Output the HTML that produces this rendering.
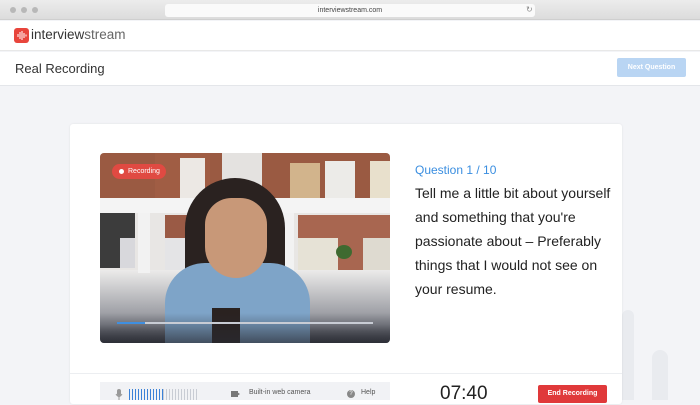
<!DOCTYPE html>
<html><head><style>
*{margin:0;padding:0;box-sizing:border-box}
body{width:700px;height:400px;overflow:hidden;background:#f3f4f7;font-family:"Liberation Sans",sans-serif;position:relative}
.a{position:absolute}
</style></head><body>
<div class="a" style="left:0;top:0;width:700px;height:20px;background:linear-gradient(#ececec,#dcdcdc);border-bottom:1px solid #cfcfcf"></div>
<div class="a" style="left:10px;top:7px;width:6px;height:6px;border-radius:50%;background:#b8b8b8"></div>
<div class="a" style="left:21px;top:7px;width:6px;height:6px;border-radius:50%;background:#b8b8b8"></div>
<div class="a" style="left:32px;top:7px;width:6px;height:6px;border-radius:50%;background:#b8b8b8"></div>
<div class="a" style="left:165px;top:4px;width:370px;height:13px;background:#fafafa;border-radius:3px;font-size:7px;color:#444;text-align:center;line-height:13px">interviewstream.com</div>
<div class="a" style="left:526px;top:5px;font-size:8px;color:#888">↻</div>
<div class="a" style="left:0;top:21px;width:700px;height:30px;background:#fff;border-bottom:1px solid #e8e8e8"></div>
<div class="a" style="left:14px;top:28px;width:15px;height:15px;border-radius:3px;background:#e8453c"></div>
<svg class="a" style="left:14px;top:28px" width="15" height="15"><g stroke="#fff" stroke-width="1"><line x1="4" y1="6" x2="4" y2="9"/><line x1="6" y1="4" x2="6" y2="11"/><line x1="8" y1="3" x2="8" y2="12"/><line x1="10" y1="5" x2="10" y2="10"/><line x1="12" y1="6.5" x2="12" y2="8.5"/></g></svg>
<div class="a" style="left:31px;top:27px;font-size:13.5px;color:#222"><span style="color:#333">interview</span><span style="color:#666">stream</span></div>
<div class="a" style="left:0;top:52px;width:700px;height:34px;background:#fff;border-bottom:1px solid #e4e6ea"></div>
<div class="a" style="left:15px;top:61px;font-size:13px;color:#333">Real Recording</div>
<div class="a" style="left:617px;top:58px;width:69px;height:19px;background:#b9d5f3;border-radius:2px;color:#fff;font-size:7px;font-weight:bold;text-align:center;line-height:19px">Next Question</div>
<div class="a" style="left:622px;top:310px;width:12px;height:90px;background:#e9ebef;border-radius:6px 6px 0 0"></div>
<div class="a" style="left:652px;top:350px;width:16px;height:50px;background:#e9ebef;border-radius:8px 8px 0 0"></div>
<div class="a" style="left:70px;top:124px;width:552px;height:280px;background:#fff;border-radius:3px;box-shadow:0 0 2px rgba(0,0,0,.08)"></div>
<div class="a" style="left:70px;top:373px;width:552px;height:1px;background:#eceef1"></div>
<div class="a" style="left:100px;top:153px;width:290px;height:190px;border-radius:4px;overflow:hidden;background:#e8e6e4">
 <div class="a" style="left:0;top:0;width:290px;height:45px;background:#9a5a42"></div>
 <div class="a" style="left:55px;top:0;width:55px;height:45px;background:#a05d44"></div>
 <div class="a" style="left:80px;top:5px;width:25px;height:40px;background:#ece8e4"></div>
 <div class="a" style="left:122px;top:0;width:40px;height:45px;background:#e4e2e0"></div>
 <div class="a" style="left:190px;top:10px;width:30px;height:35px;background:#d2b48c"></div>
 <div class="a" style="left:225px;top:8px;width:30px;height:37px;background:#ecebe8"></div>
 <div class="a" style="left:270px;top:8px;width:20px;height:37px;background:#e8e0cc"></div>
 <div class="a" style="left:0;top:45px;width:290px;height:15px;background:#f4f4f4"></div>
 <div class="a" style="left:0;top:60px;width:35px;height:55px;background:#3c3c3c"></div>
 <div class="a" style="left:20px;top:85px;width:15px;height:30px;background:#d8d8dc"></div>
 <div class="a" style="left:65px;top:62px;width:30px;height:55px;background:#9a5a45"></div>
 <div class="a" style="left:65px;top:85px;width:30px;height:32px;background:#e4e4e6"></div>
 <div class="a" style="left:198px;top:62px;width:92px;height:55px;background:#a86650"></div>
 <div class="a" style="left:198px;top:85px;width:40px;height:32px;background:#e6e2d6"></div>
 <div class="a" style="left:263px;top:85px;width:27px;height:32px;background:#dedad0"></div>
 <div class="a" style="left:236px;top:92px;width:16px;height:14px;border-radius:50%;background:#3f6a30"></div>
 <div class="a" style="left:0;top:117px;width:290px;height:73px;background:linear-gradient(#ecebea,#8a8c94 75%,#3a3c44)"></div>
 <div class="a" style="left:38px;top:60px;width:12px;height:60px;background:#f2f2f2"></div>
 <div class="a" style="left:180px;top:60px;width:14px;height:60px;background:#f2f2f2"></div>
 <div class="a" style="left:85px;top:25px;width:100px;height:165px;border-radius:50px 50px 10px 10px;background:#2a2220"></div>
 <div class="a" style="left:65px;top:110px;width:145px;height:90px;border-radius:40px 40px 0 0;background:#7ea4c8"></div>
 <div class="a" style="left:105px;top:45px;width:62px;height:80px;border-radius:30px 30px 35px 35px;background:#c89878"></div>
 <div class="a" style="left:112px;top:155px;width:28px;height:35px;background:#2a2220"></div>
 <div class="a" style="left:0;top:160px;width:290px;height:30px;background:linear-gradient(rgba(40,42,50,0),rgba(40,42,50,.7))"></div>
 <div class="a" style="left:17px;top:169px;width:256px;height:2px;background:#c8ccd4"></div>
 <div class="a" style="left:17px;top:169px;width:28px;height:2px;background:#3f8fe0"></div>
 <div class="a" style="left:12px;top:11px;width:54px;height:15px;border-radius:8px;background:#e04a42;color:#fff;font-size:7px;line-height:15px;padding-left:16px">Recording</div>
 <div class="a" style="left:19px;top:16px;width:5px;height:5px;border-radius:50%;background:#fff"></div>
</div>
<div class="a" style="left:415px;top:163px;font-size:12px;color:#3a8ee0">Question 1 / 10</div>
<div class="a" style="left:415px;top:181px;width:205px;font-size:14px;line-height:24px;color:#222">Tell me a little bit about yourself and something that you're passionate about – Preferably things that I would not see on your resume.</div>
<div class="a" style="left:100px;top:382px;width:290px;height:18px;background:#f1f2f5"></div>
<svg class="a" style="left:115px;top:389px" width="8" height="11"><rect x="2" y="0" width="4" height="7" rx="2" fill="#999"/><path d="M1 5 Q4 10 7 5 M4 8 V11" stroke="#999" fill="none"/></svg>
<div class="a" style="left:129px;top:389px;width:70px;height:11px;background:repeating-linear-gradient(90deg,#3b82d8 0 1px,transparent 1px 3px)"></div>
<div class="a" style="left:163px;top:389px;width:36px;height:11px;background:repeating-linear-gradient(90deg,#c8ccd4 0 1px,#f1f2f5 1px 3px)"></div>
<div class="a" style="left:231px;top:391px;width:7px;height:6px;background:#777"></div>
<div class="a" style="left:237px;top:392px;border-left:3px solid #777;border-top:2px solid transparent;border-bottom:2px solid transparent"></div>
<div class="a" style="left:249px;top:389px;font-size:7px;color:#555">Built-in web camera</div>
<div class="a" style="left:347px;top:390px;width:8px;height:8px;border-radius:50%;background:#888;color:#fff;font-size:6px;text-align:center;line-height:8px">?</div>
<div class="a" style="left:361px;top:389px;font-size:7px;color:#555">Help</div>
<div class="a" style="left:440px;top:383px;font-size:19px;color:#222">07:40</div>
<div class="a" style="left:538px;top:385px;width:69px;height:18px;background:#e0393a;border-radius:2px;color:#fff;font-size:7px;font-weight:bold;text-align:center;line-height:18px">End Recording</div>
</body></html>
